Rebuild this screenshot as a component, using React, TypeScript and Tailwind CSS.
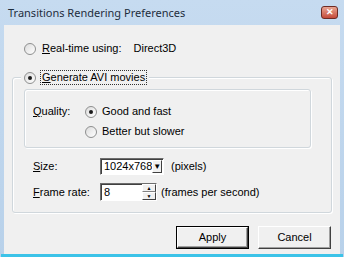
import React from "react";

function Radio({ checked }: { checked?: boolean }) {
  return (
    <span className="relative inline-flex h-[12px] w-[12px] shrink-0 items-center justify-center rounded-full border border-[#8e8f8f] bg-gradient-to-br from-[#dcdcdc] to-white">
      {checked && <span className="h-[4px] w-[4px] rounded-full bg-[#1a1a1a]" />}
    </span>
  );
}

function Group({ children, className }: { children: React.ReactNode; className?: string }) {
  return (
    <div className={`rounded-[3px] border border-[#d0d7dc] shadow-[inset_1px_1px_0_#fff,1px_1px_0_#fff] ${className ?? ""}`}>
      {children}
    </div>
  );
}

export default function App() {
  return (
    <div
      className="flex h-[257px] w-[344px] flex-col bg-gradient-to-b from-[#c6dbf0] to-[#b8d1ea] text-[11px] leading-[13px] text-black"
      style={{ fontFamily: '"Liberation Sans", Arial, sans-serif' }}
    >
      {/* title bar */}
      <div className="flex h-[25px] shrink-0 items-center justify-between pl-[8px] pr-[6px]">
        <span className="text-[11px] text-[#1e2d3d]" style={{ fontFamily: '"Noto Sans", sans-serif' }}>
          Transitions Rendering Preferences
        </span>
        <span className="flex h-[13px] w-[17px] items-center justify-center rounded-[3px] border border-[#6d2b24] bg-gradient-to-b from-[#e8a593] to-[#c4493a] text-[9px] font-bold leading-none text-white">
          ✕
        </span>
      </div>

      {/* client */}
      <div className="mx-[4px] flex flex-1 flex-col bg-[#f0f0f0] px-[8px] pt-[17px]">
        <div className="flex items-center pl-[12px]">
          <Radio />
          <span className="ml-[6px]"><u>R</u>eal-time using:</span>
          <span className="ml-[12px]">Direct3D</span>
        </div>

        <div className="relative mt-[15px]">
          <Group className="mt-[7px] pb-[11px] pl-[11px] pr-[20px] pt-[11px]">
            <Group className="flex flex-col gap-[7px] pb-[9px] pl-[8px] pt-[15px]">
              <div className="flex items-center">
                <span className="w-[52px]"><u>Q</u>uality:</span>
                <Radio checked />
                <span className="ml-[5px]">Good and fast</span>
              </div>
              <div className="flex items-center pl-[52px]">
                <Radio />
                <span className="ml-[5px]">Better but slower</span>
              </div>
            </Group>

            <div className="mt-[10px] flex items-center pl-[9px]">
              <span className="w-[67px]"><u>S</u>ize:</span>
              <div className="flex h-[17px] w-[64px] items-center border border-t-[#6d6d6d] border-l-[#6d6d6d] border-b-white border-r-white bg-white shadow-[inset_1px_1px_0_#404040]">
                <span className="flex-1 pl-[3px]">1024x768</span>
                <span className="mr-[1px] flex h-[13px] w-[14px] items-center justify-center border border-t-white border-l-white border-b-[#404040] border-r-[#404040] bg-[#f0f0f0] text-[8px] leading-none">
                  ▼
                </span>
              </div>
              <span className="ml-[7px]">(pixels)</span>
            </div>

            <div className="mt-[8px] flex items-center pl-[9px]">
              <span className="w-[67px]"><u>F</u>rame rate:</span>
              <div className="flex h-[18px] w-[57px] items-stretch border border-t-[#6d6d6d] border-l-[#6d6d6d] border-b-white border-r-white bg-white shadow-[inset_1px_1px_0_#404040]">
                <span className="flex flex-1 items-center pl-[3px]">8</span>
                <div className="flex w-[14px] flex-col">
                  <span className="flex flex-1 items-center justify-center border border-t-white border-l-white border-b-[#808080] border-r-[#404040] bg-[#f0f0f0] text-[5px] leading-none">▲</span>
                  <span className="flex flex-1 items-center justify-center border border-t-white border-l-white border-b-[#404040] border-r-[#404040] bg-[#f0f0f0] text-[5px] leading-none">▼</span>
                </div>
              </div>
              <span className="ml-[4px]">(frames per second)</span>
            </div>
          </Group>

          <div className="absolute left-[9px] top-0 flex items-center bg-[#f0f0f0] pl-[3px] pr-[2px]">
            <Radio checked />
            <span className="ml-[4px] border border-dotted border-[#333] px-[1px] leading-[13px]">
              <u>G</u>enerate AVI movies
            </span>
          </div>
        </div>

        <div className="mt-[13px] flex justify-end gap-[9px] pr-[1px]">
          <button className="h-[23px] w-[73px] border border-black bg-[#f0f0f0]">
            <span className="flex h-full w-full items-center justify-center border border-t-white border-l-white border-b-[#404040] border-r-[#404040] shadow-[inset_-1px_-1px_0_#a0a0a0]">
              Apply
            </span>
          </button>
          <button className="flex h-[23px] w-[73px] items-center justify-center border border-t-white border-l-white border-b-[#404040] border-r-[#404040] bg-[#f0f0f0] shadow-[inset_-1px_-1px_0_#a0a0a0]">
            Cancel
          </button>
        </div>
      </div>
      <div className="mx-[1px] h-[3px] bg-[#3cc3e8]" />
    </div>
  );
}
